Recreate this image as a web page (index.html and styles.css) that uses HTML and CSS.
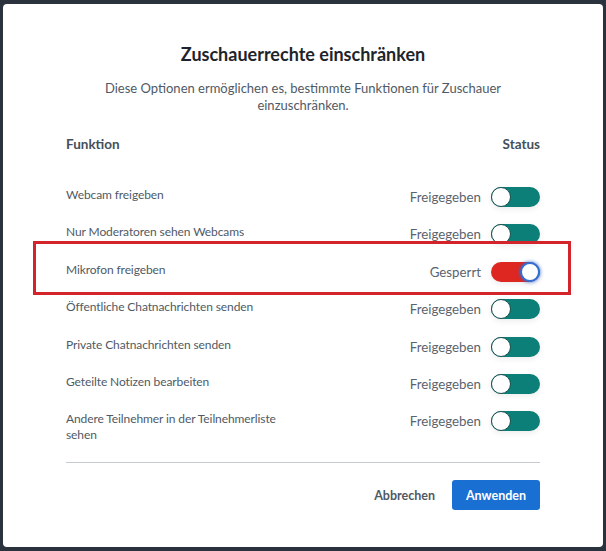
FILE: index.html
```html
<!DOCTYPE html>
<html lang="de">
<head>
<meta charset="utf-8">
<title>Zuschauerrechte einschränken</title>
<link rel="stylesheet" href="styles.css">
</head>
<body>
<div class="modal">
  <h1 class="title">Zuschauerrechte einschränken</h1>
  <p class="subtitle">Diese Optionen ermöglichen es, bestimmte Funktionen für Zuschauer einzuschränken.</p>
  <div class="table">
    <div class="head">
      <span>Funktion</span>
      <span>Status</span>
    </div>
    <div class="row">
      <span class="label">Webcam freigeben</span>
      <span class="status">Freigegeben <span class="toggle"><span class="knob"></span></span></span>
    </div>
    <div class="row">
      <span class="label">Nur Moderatoren sehen Webcams</span>
      <span class="status">Freigegeben <span class="toggle"><span class="knob"></span></span></span>
    </div>
    <div class="row highlighted">
      <span class="label">Mikrofon freigeben</span>
      <span class="status">Gesperrt <span class="toggle locked"><span class="knob"></span></span></span>
    </div>
    <div class="row">
      <span class="label">Öffentliche Chatnachrichten senden</span>
      <span class="status">Freigegeben <span class="toggle"><span class="knob"></span></span></span>
    </div>
    <div class="row">
      <span class="label">Private Chatnachrichten senden</span>
      <span class="status">Freigegeben <span class="toggle"><span class="knob"></span></span></span>
    </div>
    <div class="row">
      <span class="label">Geteilte Notizen bearbeiten</span>
      <span class="status">Freigegeben <span class="toggle"><span class="knob"></span></span></span>
    </div>
    <div class="row last">
      <span class="label">Andere Teilnehmer in der Teilnehmerliste sehen</span>
      <span class="status">Freigegeben <span class="toggle"><span class="knob"></span></span></span>
    </div>
  </div>
  <div class="footer">
    <button class="btn cancel">Abbrechen</button>
    <button class="btn apply">Anwenden</button>
  </div>
</div>
</body>
</html>
```

FILE: styles.css
```css
html, body {
  margin: 0;
  padding: 0;
}
body {
  background: #2a323d;
  padding: 4px 3px 0 3px;
  font-family: "Source Sans Pro", Lato, "Noto Sans", sans-serif;
  height: 551px;
  box-sizing: border-box;
  overflow: hidden;
}
.modal {
  width: 600px;
  height: 543px;
  background: #ffffff;
  border-radius: 4px;
  box-sizing: border-box;
  padding: 38px 63px 0 63px;
  display: flex;
  flex-direction: column;
}
.title {
  margin: 0;
  text-align: center;
  font-size: 18px;
  line-height: 24px;
  font-weight: 700;
  color: #1e242b;
}
.subtitle {
  margin: 14px auto 0 auto;
  max-width: 420px;
  text-align: center;
  font-size: 13px;
  line-height: 17px;
  color: #4f5a65;
}
.table {
  margin-top: 20px;
  display: flex;
  flex-direction: column;
}
.head {
  display: flex;
  justify-content: space-between;
  height: 20px;
  line-height: 20px;
  font-size: 13.5px;
  font-weight: 700;
  color: #454f5a;
  margin-bottom: 33px;
}
.row {
  position: relative;
  display: flex;
  justify-content: space-between;
  align-items: flex-start;
  height: 37.4px;
}
.row.last {
  height: auto;
}
.label {
  max-width: 240px;
  font-size: 12px;
  letter-spacing: -0.1px;
  line-height: 16px;
  color: #4f5a65;
}
.row.last .label {
  line-height: 15.5px;
}
.status {
  display: flex;
  align-items: center;
  gap: 10px;
  font-size: 13.3px;
  line-height: 20px;
  color: #5a646e;
}
.toggle {
  position: relative;
  width: 49px;
  height: 20px;
  border-radius: 10px;
  background: #0b7f78;
  display: flex;
  align-items: center;
  justify-content: flex-start;
  box-shadow: 0 2px 6px rgba(0, 0, 0, 0.08);
}
.knob {
  width: 20px;
  height: 20px;
  box-sizing: border-box;
  border-radius: 50%;
  background: #ffffff;
  border: 1.5px solid #17504b;
}
.toggle.locked {
  background: #df2721;
  justify-content: flex-end;
}
.toggle.locked .knob {
  border: 2px solid #2f6fd6;
  box-shadow: 0 0 3px 1px rgba(47, 111, 214, 0.55);
}
.row.highlighted::before {
  content: "";
  position: absolute;
  left: -33px;
  right: -31px;
  top: -21px;
  height: 54px;
  box-sizing: border-box;
  border: 3px solid #d3232b;
  pointer-events: none;
}
.footer {
  margin-top: 20px;
  border-top: 1px solid #c6cace;
  padding-top: 17px;
  display: flex;
  justify-content: flex-end;
  gap: 6px;
}
.btn {
  font-family: inherit;
  font-size: 12.5px;
  font-weight: 700;
  height: 30px;
  border: none;
  border-radius: 3px;
  cursor: pointer;
}
.cancel {
  background: transparent;
  color: #4f5a65;
  padding: 0 11px;
}
.apply {
  background: #1a6fd3;
  color: #ffffff;
  width: 88px;
  padding: 0;
}
```
